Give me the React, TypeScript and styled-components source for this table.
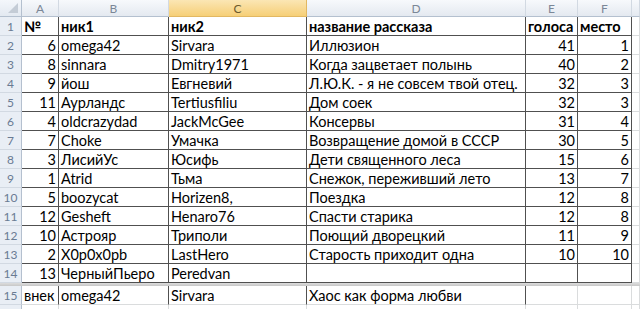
import React from 'react';
import styled, { createGlobalStyle } from 'styled-components';

const GlobalStyle = createGlobalStyle`
  html, body {
    margin: 0;
    padding: 0;
    background: #ffffff;
    overflow: hidden;
  }
`;

type Align = 'left' | 'right';

interface Row {
  n: string;
  nick1: string;
  nick2: string;
  title: string;
  votes: string;
  place: string;
  bold?: boolean;
}

const rows: Row[] = [
  { n: '№', nick1: 'ник1', nick2: 'ник2', title: 'название рассказа', votes: 'голоса', place: 'место', bold: true },
  { n: '6', nick1: 'omega42', nick2: 'Sirvara', title: 'Иллюзион', votes: '41', place: '1' },
  { n: '8', nick1: 'sinnara', nick2: 'Dmitry1971', title: 'Когда зацветает полынь', votes: '40', place: '2' },
  { n: '9', nick1: 'йош', nick2: 'Евгневий', title: 'Л.Ю.К. - я не совсем твой отец.', votes: '32', place: '3' },
  { n: '11', nick1: 'Аурландс', nick2: 'Tertiusfiliu', title: 'Дом соек', votes: '32', place: '3' },
  { n: '4', nick1: 'oldcrazydad', nick2: 'JackMcGee', title: 'Консервы', votes: '31', place: '4' },
  { n: '7', nick1: 'Choke', nick2: 'Умачка', title: 'Возвращение домой в СССР', votes: '30', place: '5' },
  { n: '3', nick1: 'ЛисийУс', nick2: 'Юсифь', title: 'Дети священного леса', votes: '15', place: '6' },
  { n: '1', nick1: 'Atrid', nick2: 'Тьма', title: 'Снежок, переживший лето', votes: '13', place: '7' },
  { n: '5', nick1: 'boozycat', nick2: 'Horizen8,', title: 'Поездка', votes: '12', place: '8' },
  { n: '12', nick1: 'Gesheft', nick2: 'Henaro76', title: 'Спасти старика', votes: '12', place: '8' },
  { n: '10', nick1: 'Астрояр', nick2: 'Триполи', title: 'Поющий дворецкий', votes: '11', place: '9' },
  { n: '2', nick1: 'X0p0x0pb', nick2: 'LastHero', title: 'Старость приходит одна', votes: '10', place: '10' },
  { n: '13', nick1: 'ЧерныйПьеро', nick2: 'Peredvan', title: '', votes: '', place: '' },
];

const extra: Row = { n: 'внек', nick1: 'omega42', nick2: 'Sirvara', title: 'Хаос как форма любви', votes: '', place: '' };
const blank: Row = { n: '', nick1: '', nick2: '', title: '', votes: '', place: '' };

const columns = ['A', 'B', 'C', 'D', 'E', 'F', ''];

const Sheet = styled.div`
  display: grid;
  grid-template-columns: 22px 37px 110px 138px 219px 52px 54px 1fr;
  grid-template-rows: 17px repeat(14, 19px) 3px 19px 19px;
  width: 640px;
  height: 309px;
  overflow: hidden;
  font-family: Lato, 'Open Sans', sans-serif;
  font-size: 14.5px;
  color: #000000;
`;

const Corner = styled.div`
  position: relative;
  background: linear-gradient(#f4f7fb, #e3e9f1);
  border-right: 1px solid #b4c0cf;
  border-bottom: 1px solid #b4c0cf;
  &::after {
    content: '';
    position: absolute;
    right: 3px;
    bottom: 3px;
    width: 0;
    height: 0;
    border-left: 10px solid transparent;
    border-bottom: 10px solid #c4ccd6;
  }
`;

const ColHead = styled.div<{ $active?: boolean }>`
  display: flex;
  align-items: center;
  justify-content: center;
  font-size: 12px;
  color: ${(p) => (p.$active ? '#6d5a2c' : '#7b8797')};
  background: ${(p) =>
    p.$active ? 'linear-gradient(#fbe6b4, #f6cf77)' : 'linear-gradient(#f7f9fc, #e4e9f0)'};
  border-right: 1px solid ${(p) => (p.$active ? '#e2b862' : '#d2d9e2')};
  border-bottom: 1px solid ${(p) => (p.$active ? '#e2b862' : '#b4c0cf')};
`;

const RowHead = styled.div`
  display: flex;
  align-items: center;
  justify-content: center;
  font-size: 12px;
  color: #6a7b93;
  background: #e9eef5;
  border-right: 1px solid #b4c0cf;
  border-bottom: 1px solid #d2d9e2;
`;

const Cell = styled.div<{ $align?: Align; $bold?: boolean; $dark?: boolean; $darkBottom?: boolean }>`
  display: flex;
  align-items: center;
  justify-content: ${(p) => (p.$align === 'right' ? 'flex-end' : 'flex-start')};
  padding: 1px 2px 0 2px;
  font-weight: ${(p) => (p.$bold ? 700 : 400)};
  white-space: nowrap;
  box-sizing: border-box;
  border-right: 1px solid ${(p) => (p.$dark ? '#505050' : '#dadcdd')};
  border-bottom: 1px solid ${(p) => (p.$darkBottom ? '#505050' : '#dadcdd')};
`;

const Separator = styled.div`
  grid-column: 1 / -1;
  background: linear-gradient(#dcdcdc, #c8c8c8);
`;

const isNum = (s: string) => /^\d+$/.test(s);

const DataRow: React.FC<{ row: Row; index?: number; darkUntil: number; darkBottom: boolean }> = ({
  row,
  index,
  darkUntil,
  darkBottom,
}) => {
  const values = [row.n, row.nick1, row.nick2, row.title, row.votes, row.place, ''];
  return (
    <>
      <RowHead>{index}</RowHead>
      {values.map((v, i) => (
        <Cell
          key={i}
          $align={isNum(v) ? 'right' : 'left'}
          $bold={row.bold}
          $dark={i < darkUntil}
          $darkBottom={darkBottom && i < 6}
        >
          {v}
        </Cell>
      ))}
    </>
  );
};

const App: React.FC = () => {
  return (
    <>
      <GlobalStyle />
      <Sheet>
        <Corner />
        {columns.map((c, i) => (
          <ColHead key={i} $active={c === 'C'}>
            {c}
          </ColHead>
        ))}
        {rows.map((r, i) => (
          <DataRow key={i} row={r} index={i + 1} darkUntil={6} darkBottom />
        ))}
        <Separator />
        <DataRow row={extra} index={15} darkUntil={4} darkBottom={false} />
        <DataRow row={blank} darkUntil={0} darkBottom={false} />
      </Sheet>
    </>
  );
};

export default App;
